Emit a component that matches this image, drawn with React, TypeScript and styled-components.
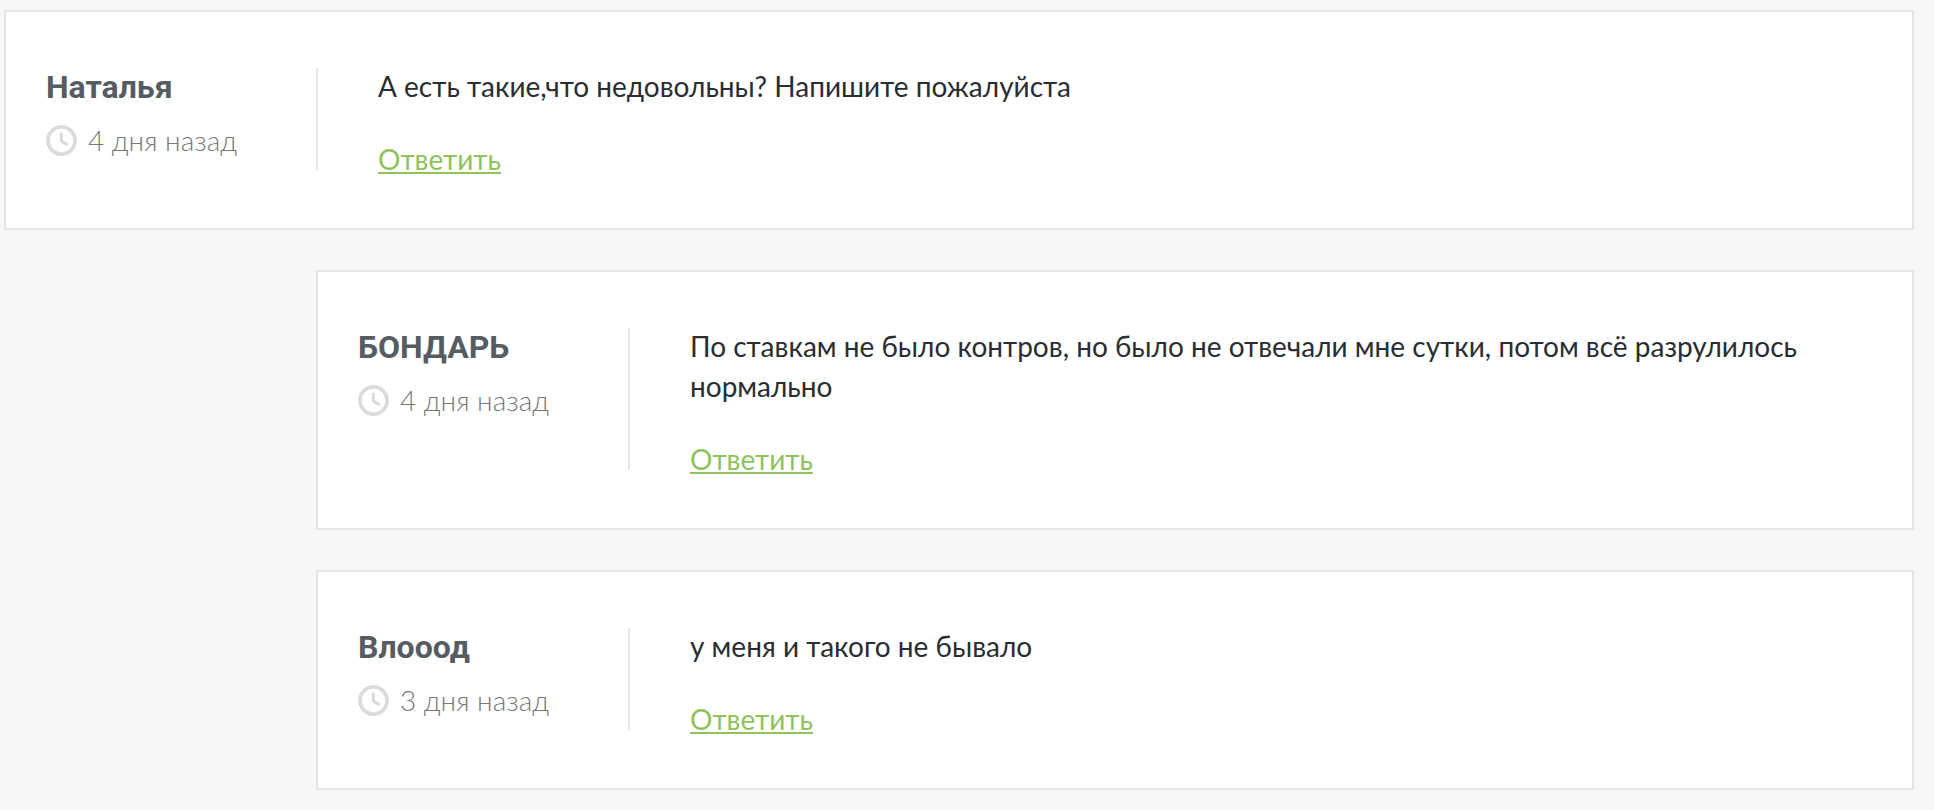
import React from 'react';
import styled, { createGlobalStyle } from 'styled-components';

const GlobalStyle = createGlobalStyle`
  *, *::before, *::after {
    box-sizing: border-box;
  }

  body {
    margin: 0;
    background: #f6f6f6;
    color: #2a2d31;
    font-family: Lato, Roboto, sans-serif;
  }
`;

const CommentList = styled.main`
  display: flex;
  flex-direction: column;
  gap: 40px;
  padding: 10px 20px 20px 4px;
`;

const Card = styled.article<{ $reply: boolean }>`
  display: flex;
  margin-left: ${({ $reply }) => ($reply ? 312 : 0)}px;
  padding: 54px 40px 49px;
  background: #fff;
  border: 2px solid #e4e4e4;
`;

const Author = styled.header`
  flex: 0 0 270px;
  padding-top: 1px;
`;

const Name = styled.h3`
  margin: 0 0 17px;
  color: #575c63;
  font: 700 32px/40px Roboto, sans-serif;
`;

const Posted = styled.div`
  display: flex;
  align-items: flex-end;
  gap: 11px;
  color: #777;
  font-size: 28px;
  font-weight: 300;
  line-height: 32px;
`;

const ClockIcon = styled.svg`
  flex: none;
  width: 31px;
  height: 31px;
  fill: none;
  stroke: #dbdbdb;
`;

const Divider = styled.div`
  flex: none;
  width: 2px;
  margin: 2px 60px 9px 0;
  background: #e6e6e6;
`;

const Message = styled.div`
  flex: 1;
  min-width: 0;
  font-size: 28px;
  line-height: 40px;
`;

const MessageText = styled.p`
  margin: 0 0 33px;
`;

const ReplyLink = styled.a`
  display: block;
  width: fit-content;
  color: #8fc25c;
  text-decoration: underline;
  text-decoration-thickness: 2px;
  text-decoration-skip-ink: none;
  text-underline-offset: 2px;
`;

interface CommentData {
  name: string;
  posted: string;
  text: string;
  reply: boolean;
}

const comments: CommentData[] = [
  {
    name: 'Наталья',
    posted: '4 дня назад',
    text: 'А есть такие,что недовольны? Напишите пожалуйста',
    reply: false,
  },
  {
    name: 'БОНДАРЬ',
    posted: '4 дня назад',
    text: 'По ставкам не было контров, но было не отвечали мне сутки, потом всё разрулилось нормально',
    reply: true,
  },
  {
    name: 'Влооод',
    posted: '3 дня назад',
    text: 'у меня и такого не бывало',
    reply: true,
  },
];

function Comment({ name, posted, text, reply }: CommentData) {
  return (
    <Card $reply={reply}>
      <Author>
        <Name>{name}</Name>
        <Posted>
          <ClockIcon viewBox="0 0 30 30" aria-hidden="true">
            <circle cx="15" cy="15" r="13.1" strokeWidth="3.6" />
            <path d="M14.8 7.4v7.2q0 1 .9 1.5l5.4 3.2" strokeWidth="3" />
          </ClockIcon>
          <time>{posted}</time>
        </Posted>
      </Author>
      <Divider />
      <Message>
        <MessageText>{text}</MessageText>
        <ReplyLink href="#reply">Ответить</ReplyLink>
      </Message>
    </Card>
  );
}

export default function App() {
  return (
    <>
      <GlobalStyle />
      <CommentList>
        {comments.map((comment) => (
          <Comment key={comment.name} {...comment} />
        ))}
      </CommentList>
    </>
  );
}
